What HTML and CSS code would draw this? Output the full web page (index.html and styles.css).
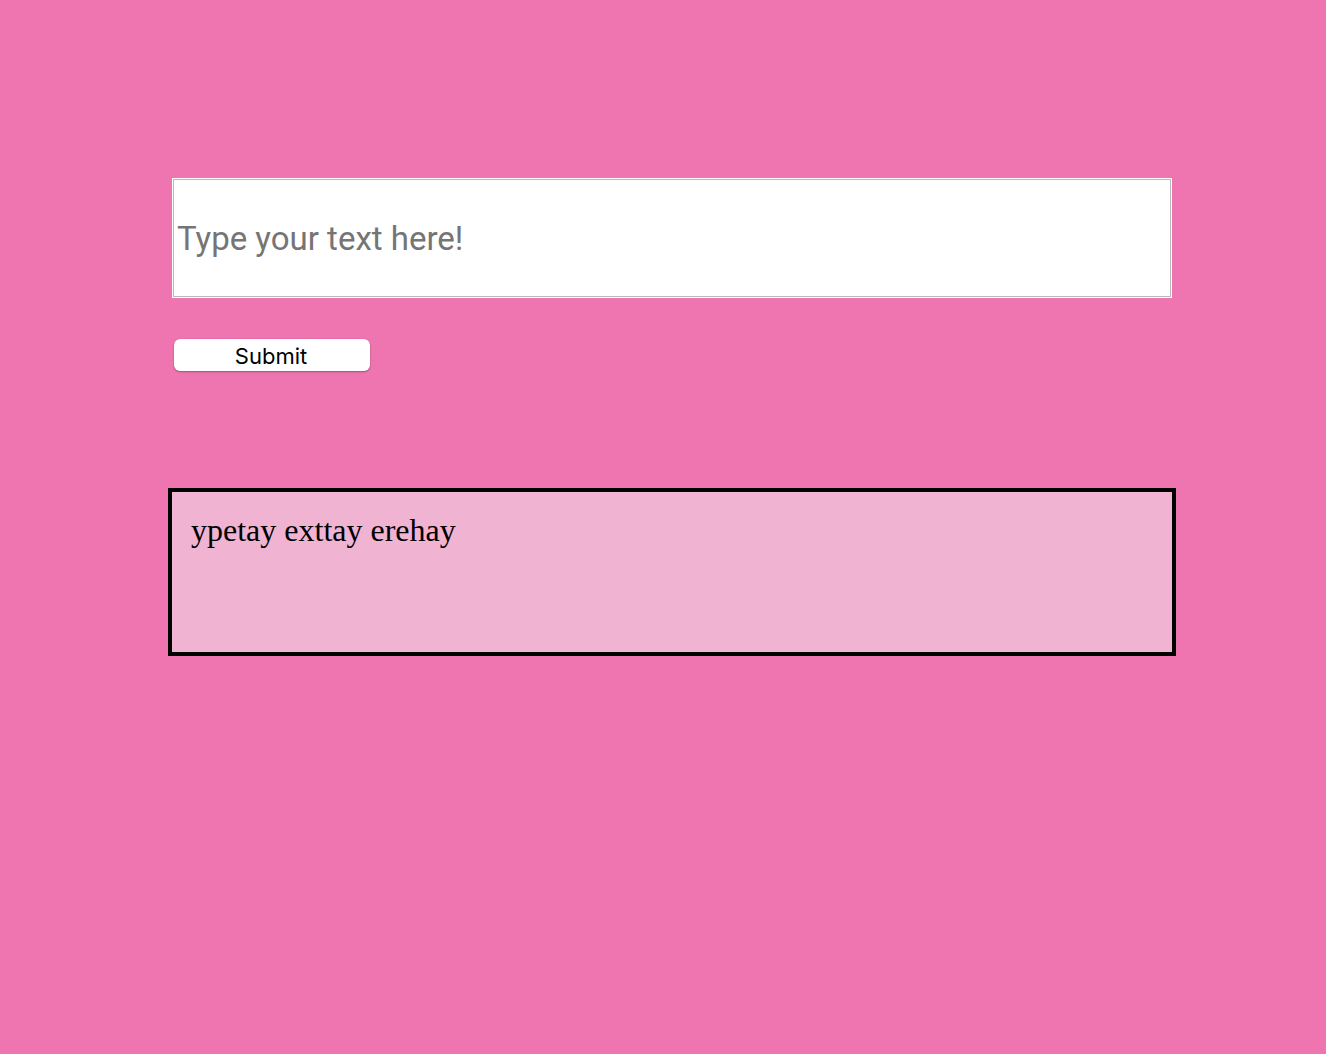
FILE: index.html
```
<!DOCTYPE html>
<html lang="en">
<head>
  <meta charset="utf-8">
  <meta name="viewport" content="width=device-width, initial-scale=1">
  <title>Pig Latin</title>
  <link rel="stylesheet" href="styles.css">
</head>
<body>
  <main class="translator">
    <form class="translator-form">
      <input class="text-input" type="text" placeholder="Type your text here!" aria-label="Type your text here!">
      <button class="submit-button" type="submit">Submit</button>
    </form>
    <output class="result">ypetay exttay erehay</output>
  </main>
</body>
</html>
```
FILE: styles.css
```
* {
  box-sizing: border-box;
}

body {
  margin: 0;
  background: #ef75b0;
  color: #000;
  font-family: "Liberation Serif", serif;
}

.translator {
  padding: 178px 150px 40px 168px;
}

.translator-form {
  display: flex;
  flex-direction: column;
  align-items: flex-start;
  gap: 41px;
  padding: 0 4px;
}

.text-input {
  width: 100%;
  height: 120px;
  padding: 2px 4px;
  border: 1px solid #fff;
  border-radius: 0;
  outline: 1px solid #bbb;
  outline-offset: -2px;
  background: #fff;
  font-family: Roboto, sans-serif;
  font-size: 33px;
}

.text-input::placeholder {
  color: #757575;
  opacity: 1;
}

.submit-button {
  width: 196px;
  height: 32px;
  margin-left: 2px;
  padding: 2px 2px 0 0;
  border: 0;
  border-radius: 6px;
  background: #fff;
  box-shadow: 0 0 1px rgba(0, 0, 0, 0.3), 0 1px 2px rgba(0, 0, 0, 0.3);
  color: #000;
  font-family: Inter, sans-serif;
  font-size: 22px;
}

.result {
  display: block;
  min-height: 168px;
  margin-top: 117px;
  padding: 19px;
  border: 4px solid #000;
  background: #f0b3d2;
  font-size: 32px;
  line-height: 38px;
}
```
